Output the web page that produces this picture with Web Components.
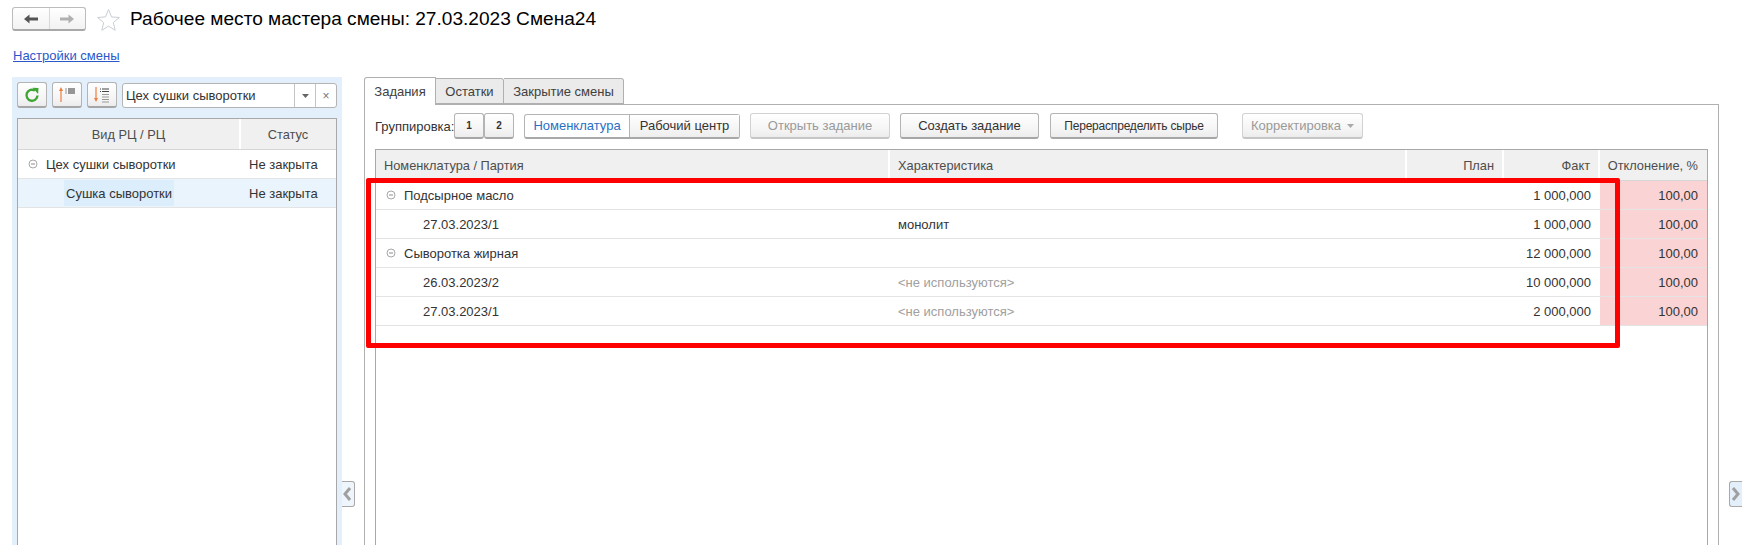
<!DOCTYPE html>
<html lang="ru"><head><meta charset="utf-8"><title>Рабочее место мастера смены</title>
<style>html,body{margin:0;padding:0;background:#fff;overflow:hidden}</style></head>
<body>
<template id="t-btn"><style>
:host{display:inline-flex;box-sizing:border-box;height:26px;align-items:center;justify-content:center;border:1px solid #b4b4b4;border-bottom:2px solid #a6a6a6;border-radius:3px;background:linear-gradient(#fff,#f4f4f4 70%,#ececec);color:#333;font:13px "Liberation Sans",sans-serif;white-space:nowrap;flex:none}
:host([disabled]){color:#9a9a9a;border-color:#d2d2d2;border-bottom-color:#c6c6c6}
</style><slot></slot></template>
<template id="t-row"><style>
:host{display:grid;grid-template-columns:var(--cols);height:var(--rowh,29px);box-sizing:border-box;border-bottom:1px solid #e4e4e4;color:#333;font:13px "Liberation Sans",sans-serif}
:host([head]){background:#f0f0f0;color:#4d4d4d;border-bottom:1px solid #d6d6d6;font-size:12.8px}
:host([sel]){background:#eaf4fc}
</style><slot></slot></template>
<template id="t-cell"><style>
:host{display:flex;align-items:center;box-sizing:border-box;padding:0 8px;white-space:nowrap;overflow:hidden;border-right:1px solid transparent;min-width:0}
:host([head]){border-right:2px solid #fff}
:host([num]){justify-content:flex-end}
:host([center]){justify-content:center}
:host([muted]){color:#a0a0a0}
:host([pink]){background:#fad4d4}
</style><slot></slot></template>
<template id="t-tree"><style>
:host{display:inline-flex;align-items:center;gap:8px;margin-left:2px}
svg{display:block;flex:none}
</style><svg width="10" height="10" viewBox="0 0 10 10"><circle cx="5" cy="5" r="4" fill="none" stroke="#a8a8a8"/><path d="M3 5h4" stroke="#8c8c8c"/></svg><slot></slot></template>
<template id="t-tab"><style>
:host{display:flex;align-items:center;box-sizing:border-box;justify-content:center;height:26px;margin-top:1px;background:#ebebeb;border:1px solid #b0b0b0;border-left:0;border-radius:0 3px 0 0;color:#404040;font:13px "Liberation Sans",sans-serif}
:host([active]){height:28px;margin-top:0;background:#fff;border:1px solid #b0b0b0;border-bottom:0;border-radius:3px 0 0 0;position:relative;z-index:1}
</style><slot></slot></template>
<template id="t-handle"><style>
:host{display:block;box-sizing:border-box;width:13px;height:26px;border:1px solid #a8a8a8}
svg{display:block}
</style><svg width="11" height="24" viewBox="0 0 11 24"><path id="p" fill="none" stroke="#a0a0a0" stroke-width="3"/></svg></template>

<template id="t-page"><style>
:host{display:flex;flex-direction:column;width:1742px;height:545px;overflow:hidden;font:13px "Liberation Sans",sans-serif;color:#333;position:relative}
.top{display:flex;align-items:center;height:24px;margin:7px 0 0 12px;flex:none}
.nav{display:flex;box-sizing:border-box;width:74px;height:24px;border:1px solid #bcbcbc;border-bottom:2px solid #a8a8a8;border-radius:3px;background:linear-gradient(#fff,#f2f2f2)}
.nav span{flex:1;display:flex;align-items:center;justify-content:center}
.nav span+span{border-left:1px solid #d8d8d8}
.star{margin-left:11px;display:block}
h1{margin:0 0 0 10px;font:400 19.1px "Liberation Sans",sans-serif;color:#000;white-space:nowrap}
.link{display:block;flex:none;margin:17px 0 0 13px;height:16px;line-height:16px;color:#2a58c8;text-decoration:underline;font-size:13px}
.main{flex:1;display:grid;grid-template-columns:330px 1fr;margin:13px 0 0 12px;min-height:0}
.left{background:#e3effb;padding:5px 5px 0;display:flex;flex-direction:column;min-height:0}
.ltools{display:flex;gap:5px;height:26px;flex:none}
.ltools x-btn{width:30px}
.combo{flex:1;box-sizing:border-box;height:25px;margin-top:1px;display:grid;grid-template-columns:1fr 21px 21px;border:1px solid #b4b4b4;border-radius:3px;background:#fff;align-items:center;color:#333}
.combo span{padding-left:3px;white-space:nowrap}
.combo i{display:flex;align-items:center;justify-content:center;height:100%;border-left:1px solid #c4c4c4;font-style:normal;color:#777;font-size:12px}
.tree{--cols:223px 1fr;margin-top:10px;flex:1;border:1px solid #a8a8a8;border-bottom:0;background:#fff;box-sizing:border-box;width:320px}
.sel{background:#dcedfb;height:26px;padding:0 2px;display:flex;align-items:center}
.right{position:relative;display:flex;flex-direction:column;min-width:0}
.tabs{display:grid;grid-template-columns:72px 68px 120px;margin-left:22px;height:28px;flex:none}
.panel{margin:-1px 0 0 22px;box-sizing:border-box;width:1355px;flex:1;border:1px solid #b0b0b0;border-bottom:0;padding:8px 10px 0;display:flex;flex-direction:column;min-height:0}
.bar{display:flex;align-items:center;height:26px;flex:none}
.bar label{width:79px;flex:none;white-space:nowrap}
.bar .n{width:30px;font-weight:700;font-size:10px}
.toggle{display:grid;grid-template-columns:104px 1fr;width:216px;height:25px;box-sizing:border-box;margin-left:10px;border:1px solid #b4b4b4;border-bottom:2px solid #a8a8a8;border-radius:3px;align-items:center;text-align:center;background:#fff;flex:none}
.toggle b{font-weight:400;color:#2a6fc4}
.toggle span{height:100%;display:flex;align-items:center;justify-content:center;border-left:1px solid #b4b4b4;background:linear-gradient(#fff,#eee)}
.grid{--cols:514px 517px 97px 96px 1fr;margin-top:10px;flex:1;border:1px solid #a8a8a8;border-bottom:0;box-sizing:border-box;width:1333px;min-height:0}
.mark{position:absolute;left:366px;top:178px;width:1254px;height:170px;box-sizing:border-box;border:5px solid #f00;border-radius:2px;pointer-events:none;z-index:2}
x-handle{position:absolute;top:481px}
.h1{left:342px;background:#eef5fc;border-left:0;border-radius:0 3px 3px 0}
.h2{left:1729px;background:#e3effb;border-right:0;border-radius:3px 0 0 3px}
</style>
<div class="top">
<div class="nav"><span><svg width="16" height="12" viewBox="0 0 16 12"><path d="M1 6 6.500 1.500v3H15v3H6.500v3z" fill="#555"/></svg></span><span><svg width="16" height="12" viewBox="0 0 16 12"><path d="M15 6 9.500 1.500v3H1v3h8.500v3z" fill="#b0b0b0"/></svg></span></div>
<svg class="star" width="23" height="23" viewBox="0 0 23 23"><path d="M11.500 1.500l3 7.400 7.900.6-6.100 5.100 1.900 7.700-6.700-4.200-6.700 4.200 1.900-7.700L.6 9.500l7.900-.6z" fill="#fff" stroke="#c9ced3"/></svg>
<h1>Рабочее место мастера смены: 27.03.2023 Смена24</h1>
</div>
<a class="link">Настройки смены</a>
<div class="main">
<div class="left">
<div class="ltools">
<x-btn><svg width="16" height="16" viewBox="0 0 16 16"><path d="M13.500 8.500A5.500 5.500 0 1 1 11 3.600" fill="none" stroke="#3fa535" stroke-width="2.400"/><path d="M8.500 .8l6 .2-.4 6z" fill="#3fa535"/></svg></x-btn>
<x-btn><svg width="20" height="18" viewBox="0 0 20 18"><path d="M4 16V3" stroke="#ef7d3c" stroke-width="1.200"/><path d="M2 5 4 1l2 4z" fill="#ef7d3c"/><path d="M8.500 3h1M11 3h7M8.500 5h1M11 5h7M8.500 7h1M11 7h7" stroke="#333" stroke-width="1"/></svg></x-btn>
<x-btn><svg width="20" height="18" viewBox="0 0 20 18"><path d="M4 1v13" stroke="#ef7d3c" stroke-width="1.200"/><path d="M2 12l2 4 2-4z" fill="#ef7d3c"/><path d="M8 3h1M10 3h7M8 5.500h1M10 5.500h7" stroke="#444"/><path d="M10 8.500h7M10 11h7M10 13.500h7M10 16h7" stroke="#999"/></svg></x-btn>
<div class="combo"><span>Цех сушки сыворотки</span><i><svg width="7" height="4" viewBox="0 0 7 4"><path d="M0 0h7L3.500 4z" fill="#666"/></svg></i><i>×</i></div>
</div>
<div class="tree">
<x-row head style="--rowh:31px"><x-cell head center>Вид РЦ / РЦ</x-cell><x-cell center>Статус</x-cell></x-row>
<x-row><x-cell><x-tree>Цех сушки сыворотки</x-tree></x-cell><x-cell>Не закрыта</x-cell></x-row>
<x-row sel><x-cell style="padding-left:46px"><span class="sel">Сушка сыворотки</span></x-cell><x-cell>Не закрыта</x-cell></x-row>
</div>
</div>
<div class="right">
<div class="tabs"><x-tab active>Задания</x-tab><x-tab>Остатки</x-tab><x-tab>Закрытие смены</x-tab></div>
<div class="panel">
<div class="bar"><label>Группировка:</label><x-btn class="n">1</x-btn><x-btn class="n">2</x-btn>
<div class="toggle"><b>Номенклатура</b><span>Рабочий центр</span></div>
<x-btn disabled style="width:140px;margin-left:10px">Открыть задание</x-btn>
<x-btn style="width:139px;margin-left:10px">Создать задание</x-btn>
<x-btn style="width:168px;margin-left:11px;font-size:12px;letter-spacing:-.2px">Перераспределить сырье</x-btn>
<x-btn disabled style="width:121px;margin-left:24px">Корректировка<svg style="margin-left:6px" width="7" height="4" viewBox="0 0 7 4"><path d="M0 0h7L3.500 4z" fill="#aaa"/></svg></x-btn>
</div>
<div class="grid">
<x-row head style="--rowh:31px"><x-cell head>Номенклатура / Партия</x-cell><x-cell head>Характеристика</x-cell><x-cell head num>План</x-cell><x-cell head num>Факт</x-cell><x-cell num>Отклонение, %</x-cell></x-row>
<x-row><x-cell><x-tree>Подсырное масло</x-tree></x-cell><x-cell></x-cell><x-cell></x-cell><x-cell num>1 000,000</x-cell><x-cell num pink>100,00</x-cell></x-row>
<x-row><x-cell style="padding-left:47px">27.03.2023/1</x-cell><x-cell>монолит</x-cell><x-cell></x-cell><x-cell num>1 000,000</x-cell><x-cell num pink>100,00</x-cell></x-row>
<x-row><x-cell><x-tree>Сыворотка жирная</x-tree></x-cell><x-cell></x-cell><x-cell></x-cell><x-cell num>12 000,000</x-cell><x-cell num pink>100,00</x-cell></x-row>
<x-row><x-cell style="padding-left:47px">26.03.2023/2</x-cell><x-cell muted>&lt;не используются&gt;</x-cell><x-cell></x-cell><x-cell num>10 000,000</x-cell><x-cell num pink>100,00</x-cell></x-row>
<x-row><x-cell style="padding-left:47px">27.03.2023/1</x-cell><x-cell muted>&lt;не используются&gt;</x-cell><x-cell></x-cell><x-cell num>2 000,000</x-cell><x-cell num pink>100,00</x-cell></x-row>
</div>
</div>
</div>
</div>
<div class="mark"></div>
<x-handle class="h1" dir="l"></x-handle>
<x-handle class="h2" dir="r"></x-handle>
</template>
<x-page></x-page>
<script>
function reg(name,id,after){customElements.define(name,class extends HTMLElement{constructor(){super();const r=this.attachShadow({mode:'open'});r.appendChild(document.getElementById(id).content.cloneNode(true));}connectedCallback(){after&&after(this)}})}
reg('x-btn','t-btn');reg('x-row','t-row');reg('x-cell','t-cell');reg('x-tree','t-tree');reg('x-tab','t-tab');
reg('x-handle','t-handle',el=>{el.shadowRoot.getElementById('p').setAttribute('d',el.getAttribute('dir')==='l'?'M8 6 3 12l5 6':'M3 6l5 6-5 6')});
reg('x-page','t-page');
</script>
</body></html>
